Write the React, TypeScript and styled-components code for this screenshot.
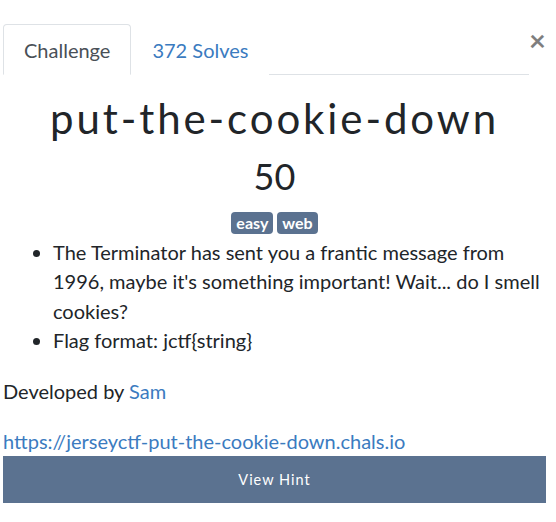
import React from "react";
import styled, { createGlobalStyle } from "styled-components";

const Global = createGlobalStyle`
  html, body { margin: 0; padding: 0; background: #fff; }
  body { font-family: Lato, "Liberation Sans", sans-serif; color: #212529; font-size: 20px; line-height: 1.5; }
  * { box-sizing: border-box; }
`;

const Modal = styled.div`
  width: 543px;
  margin-left: 3px;
  padding-top: 24px;
`;

const Header = styled.div`
  display: flex;
  align-items: flex-start;
`;

const Tabs = styled.nav`
  display: flex;
  flex: 1;
  border-bottom: 1px solid #dee2e6;
`;

const Tab = styled.a<{ $active?: boolean }>`
  display: block;
  padding: 9.5px 20px;
  margin-bottom: -1px;
  border: 1px solid ${(p) => (p.$active ? "#dee2e6" : "transparent")};
  border-bottom-color: ${(p) => (p.$active ? "#fff" : "transparent")};
  border-radius: 4px 4px 0 0;
  color: ${(p) => (p.$active ? "#495057" : "#3b7bbf")};
  background: #fff;
  text-decoration: none;
  font-size: 20px;
  line-height: 30px;
`;

const Close = styled.button`
  width: 17px;
  border: 0;
  background: none;
  padding: 0;
  margin-top: 1px;
  font-family: Lato, "Liberation Sans", sans-serif;
  font-size: 29px;
  font-weight: 700;
  line-height: 1;
  text-align: center;
  color: #000;
  opacity: 0.5;
  cursor: pointer;
`;

const Title = styled.h2`
  margin: 18px 0 0;
  text-align: center;
  font-weight: 400;
  font-size: 42px;
  letter-spacing: 2.9px;
  line-height: 1.2;
  color: #212529;
`;

const Points = styled.h3`
  margin: 12px 0 0;
  text-align: center;
  font-weight: 400;
  font-size: 36px;
  line-height: 1.2;
`;

const Tags = styled.div`
  display: flex;
  justify-content: center;
  gap: 4px;
  margin: 13px 0 4px;
`;

const Badge = styled.span`
  display: inline-block;
  background: #5b7290;
  color: #fff;
  font-weight: 700;
  font-size: 16px;
  line-height: 22px;
  height: 22px;
  padding: 0 5px;
  border-radius: 4px;
`;

const List = styled.ul`
  margin: 0 0 20px;
  padding-left: 50px;
  line-height: 29.6px;
`;

const Para = styled.p<{ $last?: boolean }>`
  margin: 0 0 ${(p) => (p.$last ? 0 : 20)}px;
`;

const Link = styled.a`
  color: #3b7bbf;
  text-decoration: none;
`;

const HintButton = styled.button`
  display: block;
  width: 100%;
  height: 47px;
  border: 0;
  background: #5b7290;
  color: #fff;
  font-family: Lato, "Liberation Sans", sans-serif;
  font-size: 14.5px;
  letter-spacing: 1px;
  cursor: pointer;
`;

export default function App() {
  return (
    <>
      <Global />
      <Modal>
        <Header>
          <Tabs>
            <Tab $active>Challenge</Tab>
            <Tab>372 Solves</Tab>
          </Tabs>
          <Close aria-label="Close">×</Close>
        </Header>
        <Title>put-the-cookie-down</Title>
        <Points>50</Points>
        <Tags>
          <Badge>easy</Badge>
          <Badge>web</Badge>
        </Tags>
        <List>
          <li>
            The Terminator has sent you a frantic message from 1996, maybe it's something important! Wait... do I smell
            cookies?
          </li>
          <li>Flag format: jctf{"{"}string{"}"}</li>
        </List>
        <Para>
          Developed by <Link href="#">Sam</Link>
        </Para>
        <Para $last>
          <Link href="#">https://jerseyctf-put-the-cookie-down.chals.io</Link>
        </Para>
        <HintButton>View Hint</HintButton>
      </Modal>
    </>
  );
}
